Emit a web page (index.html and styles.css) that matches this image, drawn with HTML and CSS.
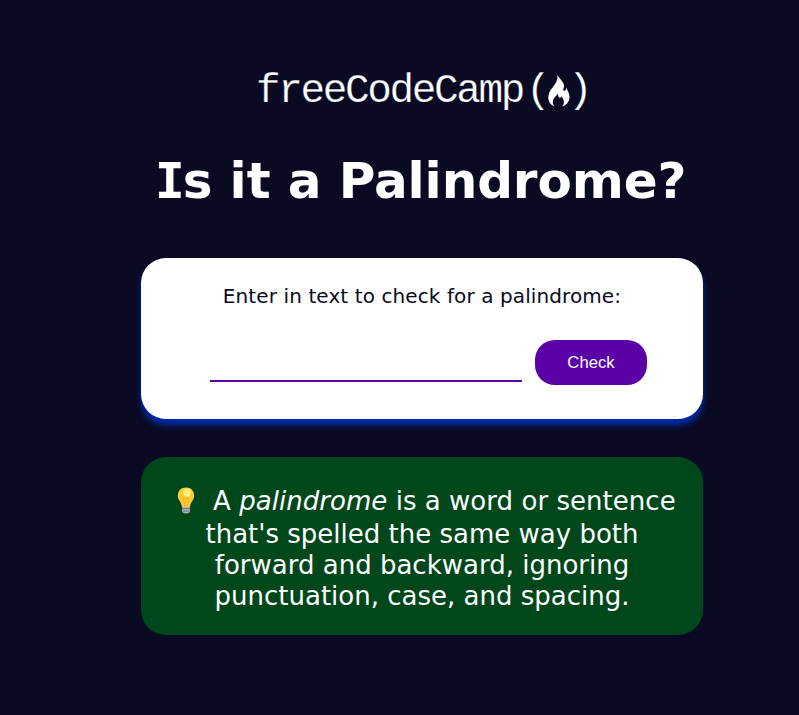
FILE: index.html
```html
<!DOCTYPE html>
<html lang="en">
<head>
<meta charset="utf-8">
<title>Palindrome Checker</title>
<link rel="stylesheet" href="styles.css">
</head>
<body>
<main class="page">
  <div class="logo">
    <span class="logo-name">freeCodeCamp</span>
    <span class="paren">(</span>
    <svg class="flame" viewBox="0 0 22 32" width="22" height="32" aria-hidden="true">
      <path fill="#fff" d="M9.200 0C10 4.500 8.500 7 6.200 10.200C3.200 14.200 .3 17.500 .3 22.500C.3 26.500 2.600 30 6.500 31.500C4.900 29.500 4.500 27.700 5 25.500C5.700 22.800 8.300 21.300 9.500 18.800C10.500 20 9.900 21.700 11.200 22.600C12.300 23.300 13.200 22.500 13.100 21.200C15.300 23 16.300 25.600 15.800 28.200C15.600 29.500 15 30.600 14.200 31.500C18.600 30 21.400 26.500 21.500 22.400C21.600 19 20 16.300 18.300 12.500C18.400 15 17 16.400 15.700 15.600C14.500 14.700 16.300 12.800 16 10.200C15.300 6 11.300 3.800 9.200 0Z"/>
    </svg>
    <span class="paren">)</span>
  </div>
  <h1 class="title"><span class="slab">I</span>s it a Palindrome?</h1>
  <section class="checker">
    <label class="prompt" for="text-input">Enter in text to check for a palindrome:</label>
    <div class="controls">
      <input class="text-input" id="text-input" type="text">
      <button class="check" type="button">Check</button>
    </div>
  </section>
  <section class="definition">
    <p class="line first"><svg class="bulb" viewBox="0 0 18 27" width="18" height="27" aria-hidden="true">
      <path fill="#a9b0b7" d="M5 19h8v5q0 2-4 2.500Q5 26 5 24Z"/>
      <path stroke="#697780" stroke-width="1" d="M5 21.500h8M5.500 24h7"/>
      <path fill="#fdcb38" d="M9 .5C4 .5 .8 4 .8 8.600C.8 13.500 4.300 14.500 4.900 19.500Q9 21 13.100 19.500C13.700 14.500 17.200 13.500 17.200 8.600C17.200 4 14 .5 9 .5Z"/>
      <path fill="none" stroke="#efac27" stroke-width="1" d="M7.700 19.500L6.500 11l2.500 1 2.500-1-1.200 8.500"/>
      <circle cx="10" cy="5.500" r="4" fill="#fff07a"/>
    </svg><span>A <em>palindrome</em> is a word or sentence</span></p>
    <p class="line">that's spelled the same way both</p>
    <p class="line">forward and backward, ignoring</p>
    <p class="line">punctuation, case, and spacing.</p>
  </section>
</main>
</body>
</html>
```
FILE: styles.css
```css
* { box-sizing: border-box; }
html { overflow: hidden; }
body {
  margin: 0;
  height: 715px;
  background: #0a0a23;
  color: #fff;
  font-family: "DejaVu Sans", sans-serif;
}
.page {
  width: 562px;
  margin-left: 141px;
  padding-top: 66px;
}
.logo {
  display: flex;
  height: 50px;
  padding-left: 115px;
  font: 41px/51px "Liberation Mono", monospace;
  -webkit-text-stroke: 0.25px #0a0a23;
}
.logo-name { width: 270px; letter-spacing: -2.35px; }
.paren { width: 20px; }
.flame { flex: none; margin: 9px -2px 0 2px; }
.title {
  margin: 31px 0 0;
  height: 111px;
  font-size: 50px;
  line-height: 68px;
  letter-spacing: -0.1px;
  text-align: center;
  white-space: nowrap;
}
.slab { margin: 0 -2px 0 -3px; font-family: "DejaVu Sans Mono", monospace; }
.checker {
  height: 161px;
  padding-top: 23px;
  border-radius: 25px;
  background: #fff;
  color: #0a0a23;
  box-shadow: 0 6px 6px #002ead;
}
.prompt {
  display: block;
  height: 30px;
  font-size: 20px;
  line-height: 31px;
  letter-spacing: 0.1px;
  text-align: center;
  white-space: nowrap;
}
.controls { display: flex; margin: 29px 0 0 69px; }
.text-input {
  width: 312px;
  height: 42px;
  margin-right: 13px;
  padding: 0;
  border: 0;
  border-bottom: 2px solid #5a01a7;
  background: transparent;
  outline: 0;
}
.check {
  width: 112px;
  height: 45px;
  padding: 0;
  border: 0;
  border-radius: 20px;
  background: #5a01a7;
  color: #fff;
  font: 16.7px "Liberation Sans", sans-serif;
}
.definition {
  height: 178px;
  margin-top: 38px;
  padding-top: 29px;
  border-radius: 25px;
  background: #00471b;
  font-size: 26px;
}
.line {
  margin: 0;
  height: 31px;
  line-height: 31px;
  white-space: nowrap;
  text-align: center;
}
.first { display: flex; height: 33px; padding-left: 36px; letter-spacing: 0.04px; }
.bulb { flex: none; margin: 1px 18px 0 0; }
```
